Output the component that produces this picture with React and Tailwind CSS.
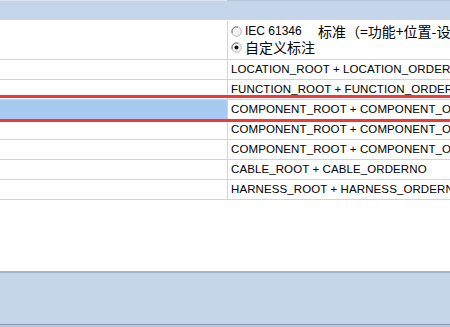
import React from 'react';

const rows = [
    'LOCATION_ROOT + LOCATION_ORDERNO',
    'FUNCTION_ROOT + FUNCTION_ORDERNO',
    'COMPONENT_ROOT + COMPONENT_ORDERNO',
    'COMPONENT_ROOT + COMPONENT_ORDERNO',
    'COMPONENT_ROOT + COMPONENT_ORDERNO',
    'CABLE_ROOT + CABLE_ORDERNO',
    'HARNESS_ROOT + HARNESS_ORDERNO',
];

const cjk = {fontFamily: '"Noto Sans CJK SC", sans-serif'};

function Radio({checked}) {
    return (
        <svg width="11" height="11" viewBox="0 0 11 11" className="shrink-0">
            <circle cx="5.5" cy="5.5" r="4.8" fill="#f4f4f4" stroke="#b4b4b4" strokeWidth="1"/>
            <path d="M1.2 7 A4.6 4.6 0 0 1 7 1.2" fill="none" stroke="#7a7a7a" strokeWidth="1"/>
            {checked && <circle cx="5.5" cy="5.5" r="2" fill="#111"/>}
        </svg>
    );
}

export default function App() {
    return (
        <div className="w-[450px] h-[327px] overflow-hidden bg-white flex flex-col text-[11.5px] text-black"
             style={{fontFamily: '"Liberation Sans", Arial, sans-serif'}}>
            {/* header */}
            <div className="flex h-px shrink-0">
                <div className="w-[227px] bg-[#dde6f2]"></div>
                <div className="flex-1 bg-[#b6c7df]"></div>
            </div>
            <div className="h-[19px] shrink-0 bg-[#c5d5ea]"></div>
            <div className="h-px shrink-0 bg-white"></div>

            {/* first row with options */}
            <div className="flex h-[39px] shrink-0 border-b border-[#cad6e8]">
                <div className="w-[228px] shrink-0 border-r border-[#cad6e8]"></div>
                <div className="flex-1 min-w-0 pl-[3px] pt-[2px] flex flex-col leading-[16px] whitespace-nowrap overflow-hidden">
                    <div className="flex items-center gap-[3px]">
                        <Radio/>
                        <span className="inline-block w-[73px] shrink-0 text-[12px]">IEC 61346</span>
                        <span className="text-[14px] -ml-[3px]" style={cjk}>标准（=功能+位置-设备）</span>
                    </div>
                    <div className="flex items-center gap-[3px]">
                        <Radio checked/>
                        <span className="text-[14px]" style={cjk}>自定义标注</span>
                    </div>
                </div>
            </div>

            {/* table rows */}
            {rows.map((text, i) => (
                <div key={i} className="relative flex h-[20px] shrink-0 border-b border-[#cad6e8]">
                    <div className={`w-[228px] shrink-0 border-r border-[#cad6e8] ${i === 2 ? 'bg-[#a6caf0]' : ''}`}></div>
                    <div className="flex-1 min-w-0 pl-[3px] flex items-center whitespace-nowrap overflow-hidden tracking-[0.1px]">
                        {text}
                    </div>
                    {i === 2 && (
                        <>
                            <div className="absolute left-0 right-0 -top-[5px] h-[3px] bg-[#f03a3a] z-10"></div>
                            <div className="absolute left-0 right-0 -bottom-[3px] h-[3px] bg-[#f03a3a] z-10"></div>
                        </>
                    )}
                </div>
            ))}

            <div className="flex-1"></div>

            {/* bottom panel */}
            <div className="h-[2px] shrink-0 bg-[#a4b3c8]"></div>
            <div className="h-[51px] shrink-0 bg-[#c5d5ea]"></div>
            <div className="h-px shrink-0 bg-[#8a9bb3]"></div>
            <div className="h-[2px] shrink-0 bg-[#b9c7db]"></div>
        </div>
    );
}
